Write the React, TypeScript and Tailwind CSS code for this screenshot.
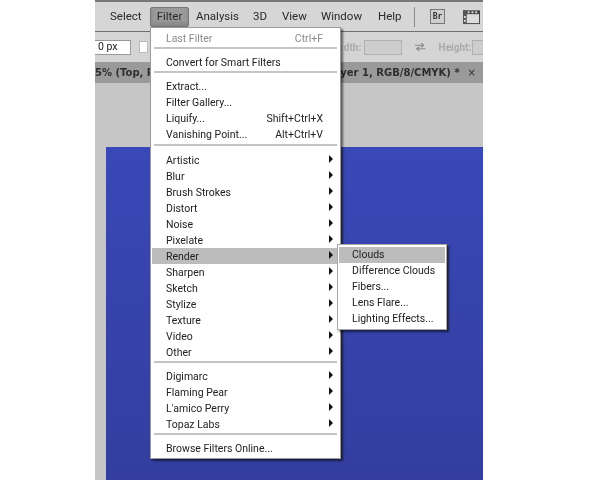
const font = 'font-["Roboto",sans-serif]';

type Row = { label: string; shortcut?: string; arrow?: boolean; disabled?: boolean; active?: boolean };

const groups: Row[][] = [
  [{ label: 'Last Filter', shortcut: 'Ctrl+F', disabled: true }],
  [{ label: 'Convert for Smart Filters' }],
  [
    { label: 'Extract...' },
    { label: 'Filter Gallery...' },
    { label: 'Liquify...', shortcut: 'Shift+Ctrl+X' },
    { label: 'Vanishing Point...', shortcut: 'Alt+Ctrl+V' },
  ],
  [
    { label: 'Artistic', arrow: true },
    { label: 'Blur', arrow: true },
    { label: 'Brush Strokes', arrow: true },
    { label: 'Distort', arrow: true },
    { label: 'Noise', arrow: true },
    { label: 'Pixelate', arrow: true },
    { label: 'Render', arrow: true, active: true },
    { label: 'Sharpen', arrow: true },
    { label: 'Sketch', arrow: true },
    { label: 'Stylize', arrow: true },
    { label: 'Texture', arrow: true },
    { label: 'Video', arrow: true },
    { label: 'Other', arrow: true },
  ],
  [
    { label: 'Digimarc', arrow: true },
    { label: 'Flaming Pear', arrow: true },
    { label: "L'amico Perry", arrow: true },
    { label: 'Topaz Labs', arrow: true },
  ],
  [{ label: 'Browse Filters Online...' }],
];

const renderItems = ['Clouds', 'Difference Clouds', 'Fibers...', 'Lens Flare...', 'Lighting Effects...'];

function MenuRow({ row }: { row: Row }) {
  return (
    <div
      className={`mx-px flex h-4 items-center justify-between pl-[14px] pr-[6px] pt-[2px] text-[10.5px] ${
        row.active ? 'bg-[#bcbcbc]' : ''
      } ${row.disabled ? 'text-[#8a8a8a]' : 'text-[#222222]'}`}
    >
      <span>{row.label}</span>
      {row.shortcut && <span className="pr-[10px]">{row.shortcut}</span>}
      {row.arrow && (
        <span className="mb-[4px] h-0 w-0 border-y-[4px] border-l-[4px] border-y-transparent border-l-[#111111]" />
      )}
    </div>
  );
}

function FilterMenu() {
  return (
    <div className="absolute left-[55px] top-[27px] w-[191px] border border-[#9a9a9a] bg-white py-[2px] shadow-[2px_2px_2px_rgba(0,0,0,0.55)]">
      {groups.map((group, i) => (
        <div key={i}>
          {i > 0 && (
            <div className={`mx-[3px] h-[2px] bg-[#c4c4c4] ${i === 3 ? 'mb-[6px] mt-[2px]' : 'mb-[5px] mt-px'}`} />
          )}
          {group.map((row) => (
            <MenuRow key={row.label} row={row} />
          ))}
        </div>
      ))}
    </div>
  );
}

function RenderSubmenu() {
  return (
    <div className="absolute left-[242px] top-[244px] w-[110px] border border-[#a8a8a8] bg-white px-px py-[2px] shadow-[2px_2px_2px_rgba(0,0,0,0.55)]">
      {renderItems.map((item, i) => (
        <div
          key={item}
          className={`flex h-4 items-center pl-[13px] text-[10.5px] text-[#222222] ${i === 0 ? 'bg-[#bcbcbc]' : ''}`}
        >
          {item}
        </div>
      ))}
    </div>
  );
}

function MenuBar() {
  return (
    <div className="flex h-[32px] items-center border-b border-t-2 border-b-[#6e6e6e] border-t-[#777777] bg-[#d6d6d6] pl-[15px] text-[11.5px] text-[#2a2a2a]">
      <span className="w-[32px]">Select</span>
      <span className="ml-[8px] flex h-[20px] w-[39px] items-center justify-center rounded-[2px] border border-[#777777] bg-[#9a9a9a] shadow-[inset_0_-3px_4px_rgba(0,0,0,0.15)]">
        Filter
      </span>
      <span className="ml-[7px] w-[40px]">Analysis</span>
      <span className="ml-[17px] w-[15px]">3D</span>
      <span className="ml-[14px] w-[27px]">View</span>
      <span className="ml-[12px] w-[43px]">Window</span>
      <span className="ml-[14px] w-[23px]">Help</span>
      <span className="ml-[13px] h-[20px] w-px bg-[#8c8c8c]" />
      <span className="ml-[15px] flex h-[15px] w-[15px] items-center justify-center border border-[#777777] bg-[#cfcfcf] font-['DejaVu_Sans_Mono',monospace] text-[8px] font-bold text-[#333333]">
        Br
      </span>
      <svg className="ml-[18px]" width="17" height="16" viewBox="0 0 18 16">
        <rect x="0.5" y="2" width="17" height="13" fill="#dcdcdc" stroke="#444444" />
        <rect x="0" y="1" width="18" height="4" fill="#444444" />
        <rect x="0" y="1" width="4" height="14" fill="#555555" />
        <rect x="5" y="2" width="2" height="2" fill="#dddddd" />
        <rect x="9" y="2" width="2" height="2" fill="#dddddd" />
        <rect x="13" y="2" width="2" height="2" fill="#dddddd" />
        <rect x="1" y="7" width="2" height="2" fill="#dddddd" />
        <rect x="1" y="11" width="2" height="2" fill="#dddddd" />
      </svg>
    </div>
  );
}

function OptionsBar() {
  return (
    <div className="flex h-[30px] items-center bg-[#d4d4d4] text-[10px] text-[#aaaaaa]">
      <div className="flex h-[15px] w-[38px] items-center border border-l-0 border-[#999999] bg-white pl-[3px] text-[10.5px] text-[#222222]">
        0 px
      </div>
      <div className="ml-[8px] h-[12px] w-[9px] border border-[#bbbbbb] bg-white" />
      <span className="ml-[186px] w-[29px] text-right font-bold">dth:</span>
      <div className="ml-[3px] h-[15px] w-[40px] border border-[#b0b0b0] bg-[#cdcdcd]" />
      <svg className="ml-[13px]" width="11" height="10" viewBox="0 0 12 10" fill="none" stroke="#8a8a8a" strokeWidth="1.3">
        <path d="M0 3h10M7 0.5l3 2.5-3 2.5" />
        <path d="M12 7H2M5 4.5L2 7l3 2.5" />
      </svg>
      <span className="ml-[13px] w-[30px] font-bold">Height:</span>
      <div className="ml-[3px] h-[15px] w-[12px] border border-r-0 border-[#b0b0b0] bg-[#cdcdcd]" />
    </div>
  );
}

function TabBar() {
  return (
    <div className="flex h-[21px] items-center justify-between bg-[#9a9a9a] pr-[7px] font-['DejaVu_Sans',sans-serif] text-[10px] font-bold text-[#2e2e2e]">
      <span>5% (Top, R</span>
      <span className="flex items-center gap-[8px]">
        <span>ayer 1, RGB/8/CMYK) *</span>
        <span className="font-normal">×</span>
      </span>
    </div>
  );
}

export default function App() {
  return (
    <div className={`h-[480px] w-[600px] overflow-hidden bg-white blur-[0.4px] ${font}`}>
      <div className="relative ml-[95px] flex h-full w-[388px] flex-col">
        <MenuBar />
        <OptionsBar />
        <TabBar />
        <div className="flex-1 bg-[#c6c6c6] pl-[11px] pt-[64px]">
          <div className="h-full bg-gradient-to-b from-[#3a48b8] to-[#333e9f]" />
        </div>
        <FilterMenu />
        <RenderSubmenu />
      </div>
    </div>
  );
}
